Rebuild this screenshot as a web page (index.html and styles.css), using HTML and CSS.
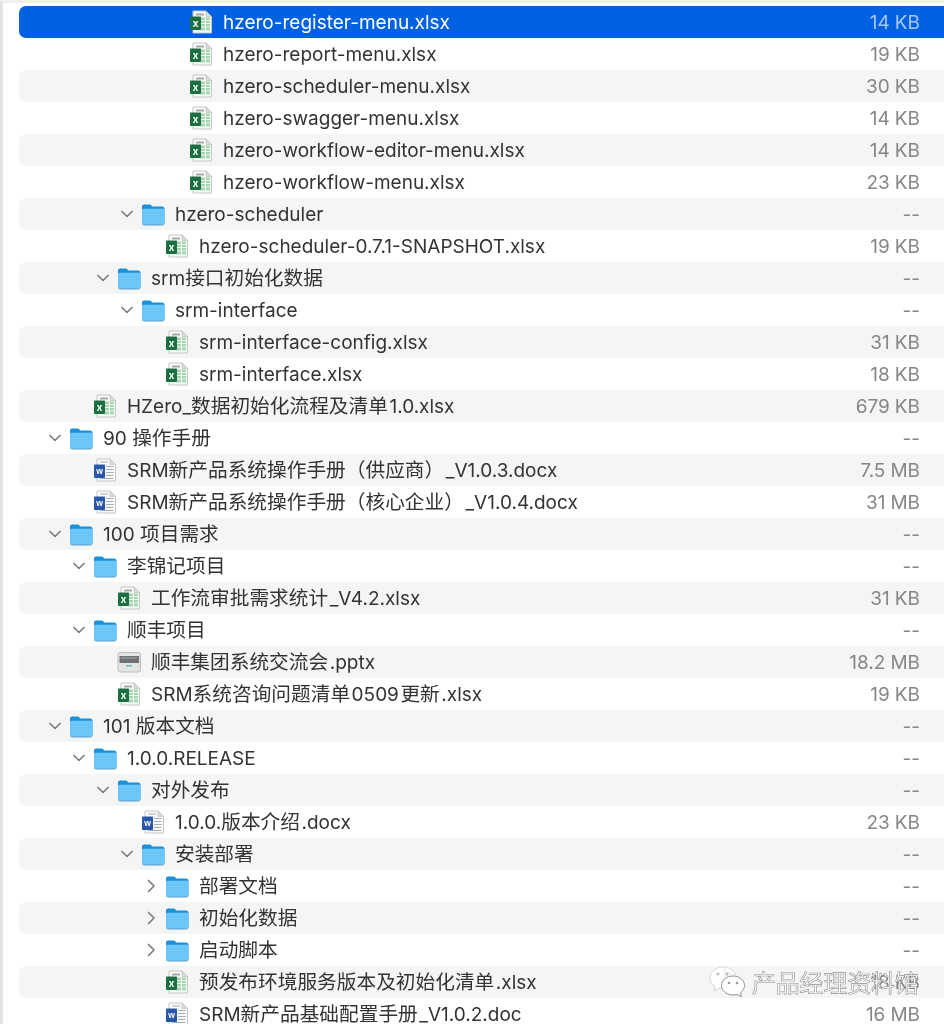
FILE: index.html
```html
<!DOCTYPE html>
<html lang="zh">
<head>
<meta charset="utf-8">
<title>Finder</title>
<link rel="stylesheet" href="styles.css">
</head>
<body>
<svg class="defs" width="0" height="0" aria-hidden="true">
  <symbol id="chev-d" viewBox="0 0 16 16"><path d="M3 5.500 8 10.500 13 5.500" fill="none" stroke="#7d7d7d" stroke-width="1.700" stroke-linecap="round" stroke-linejoin="round"/></symbol>
  <symbol id="chev-r" viewBox="0 0 16 16"><path d="M5.500 2.500 11 8 5.500 13.500" fill="none" stroke="#7d7d7d" stroke-width="1.700" stroke-linecap="round" stroke-linejoin="round"/></symbol>
  <symbol id="folder" viewBox="0 0 24 24">
    <path d="M1 4.500Q1 2.500 3 2.500H8.500Q9.800 2.500 10.500 3.600L11.300 4.600H21Q23.500 4.600 23.500 7V20Q23.500 22.500 21 22.500H3.500Q1 22.500 1 20Z" fill="#1c8fdc"/>
    <path d="M1 8Q1 6.700 2.500 6.700H22Q23.500 6.700 23.500 8V20Q23.500 22.600 21 22.600H3.500Q1 22.600 1 20Z" fill="#6cc6f8"/>
    <path d="M1 20Q1 22.600 3.500 22.600H21Q23.500 22.600 23.500 20V21Q23.500 23.500 21 23.500H3.500Q1 23.500 1 21Z" fill="#5a9fc8"/>
  </symbol>
  <symbol id="xls" viewBox="0 0 24 24">
    <path d="M4 1H17L22.500 6.500V23H4Z" fill="#fafafa" stroke="#c4c4c4"/>
    <path d="M17 1V6.500H22.500Z" fill="#dcdcdc" stroke="#bbb" stroke-width=".6"/>
    <path d="M7 3.500H15V5.500H7Z" fill="#a8a8a8"/>
    <path d="M12 7.500H21V20.500H12Z" fill="#a5d8ae"/>
    <path d="M12 10.500H21M12 13.500H21M12 17H21M16.500 7.500V20.500" stroke="#fff" stroke-width=".9"/>
    <rect x="1" y="6.500" width="11" height="13.500" rx=".8" fill="#1d6f42"/>
    <text x="6.500" y="16.600" class="icon-letter">x</text>
  </symbol>
  <symbol id="doc" viewBox="0 0 24 24">
    <path d="M4 1H17L22.500 6.500V23H4Z" fill="#fafafa" stroke="#c4c4c4"/>
    <path d="M17 1V6.500H22.500Z" fill="#dcdcdc" stroke="#bbb" stroke-width=".6"/>
    <path d="M7 4H15M13 8.500H20.500M13 11.500H20.500M13 14.500H20.500M13 17.500H20.500M7 20.500H20.500" stroke="#a9adb5" stroke-width="1.100"/>
    <rect x="1" y="6.500" width="11" height="13.500" rx=".8" fill="#2a57a8"/>
    <text x="6.500" y="16.400" class="icon-letter small">w</text>
  </symbol>
  <symbol id="ppt" viewBox="0 0 24 24">
    <rect x="1" y="2.500" width="22.500" height="19.500" rx="2.500" fill="#e4e4e2" stroke="#bdbdbd"/>
    <rect x="2.500" y="6" width="19.500" height="7" fill="#6e7275"/>
    <path d="M4 8H20" stroke="#a6a9ab" stroke-width="1"/>
    <rect x="9" y="15" width="6" height="1.500" fill="#6db4bb"/>
  </symbol>
  <symbol id="wechat" viewBox="0 0 38 34">
    <path d="M15 2C7.500 2 2 7 2 13c0 3.500 2 6.500 5 8.500L6 26l5-2.800c1 .3 2.500 .5 4 .5" fill="#fff" stroke="#d4d4d4" stroke-width="1"/>
    <path d="M15 2c6.500 0 11.500 3.500 12.800 8.500" fill="#fff" stroke="#d4d4d4" stroke-width="1"/>
    <path d="M25 11c6.500 0 11.500 4.300 11.500 9.500 0 3-1.600 5.500-4 7.300l1 4-4.500-2.400c-1.200 .4-2.700 .6-4 .6-6.500 0-11.500-4.300-11.500-9.500S18.500 11 25 11Z" fill="#fff" stroke="#8f8f8f" stroke-width="1"/>
    <circle cx="10" cy="9" r="1.500" fill="#bbb"/><circle cx="19" cy="9" r="1.500" fill="#bbb"/>
    <circle cx="21" cy="18" r="1.300" fill="#999"/><circle cx="29" cy="18" r="1.300" fill="#999"/>
  </symbol>
</svg>

<main class="window">
  <div class="list">
    <div class="row selected l4"><span class="chev"></span><svg class="ic"><use href="#xls"/></svg><span class="name">hzero-register-menu.xlsx</span><span class="size">14<i></i>KB</span></div>
    <div class="row l4"><span class="chev"></span><svg class="ic"><use href="#xls"/></svg><span class="name">hzero-report-menu.xlsx</span><span class="size">19<i></i>KB</span></div>
    <div class="row l4"><span class="chev"></span><svg class="ic"><use href="#xls"/></svg><span class="name">hzero-scheduler-menu.xlsx</span><span class="size">30<i></i>KB</span></div>
    <div class="row l4"><span class="chev"></span><svg class="ic"><use href="#xls"/></svg><span class="name">hzero-swagger-menu.xlsx</span><span class="size">14<i></i>KB</span></div>
    <div class="row l4"><span class="chev"></span><svg class="ic"><use href="#xls"/></svg><span class="name">hzero-workflow-editor-menu.xlsx</span><span class="size">14<i></i>KB</span></div>
    <div class="row l4"><span class="chev"></span><svg class="ic"><use href="#xls"/></svg><span class="name">hzero-workflow-menu.xlsx</span><span class="size">23<i></i>KB</span></div>
    <div class="row l3"><svg class="chev"><use href="#chev-d"/></svg><svg class="ic"><use href="#folder"/></svg><span class="name">hzero-scheduler</span><span class="size">--</span></div>
    <div class="row l4-"><span class="chev"></span><svg class="ic"><use href="#xls"/></svg><span class="name">hzero-scheduler-0.7.1-SNAPSHOT.xlsx</span><span class="size">19<i></i>KB</span></div>
    <div class="row l2"><svg class="chev"><use href="#chev-d"/></svg><svg class="ic"><use href="#folder"/></svg><span class="name">srm<b class="zh">接口初始化数据</b></span><span class="size">--</span></div>
    <div class="row l3"><svg class="chev"><use href="#chev-d"/></svg><svg class="ic"><use href="#folder"/></svg><span class="name">srm-interface</span><span class="size">--</span></div>
    <div class="row l4-"><span class="chev"></span><svg class="ic"><use href="#xls"/></svg><span class="name">srm-interface-config.xlsx</span><span class="size">31<i></i>KB</span></div>
    <div class="row l4-"><span class="chev"></span><svg class="ic"><use href="#xls"/></svg><span class="name">srm-interface.xlsx</span><span class="size">18<i></i>KB</span></div>
    <div class="row l1"><span class="chev"></span><svg class="ic"><use href="#xls"/></svg><span class="name">HZero_<b class="zh">数据初始化流程及清单</b>1.0.xlsx</span><span class="size">679<i></i>KB</span></div>
    <div class="row l0"><svg class="chev"><use href="#chev-d"/></svg><svg class="ic"><use href="#folder"/></svg><span class="name">90 <b class="zh">操作手册</b></span><span class="size">--</span></div>
    <div class="row l1"><span class="chev"></span><svg class="ic"><use href="#doc"/></svg><span class="name">SRM<b class="zh">新产品系统操作手册（供应商）</b>_V1.0.3.docx</span><span class="size">7.5<i></i>MB</span></div>
    <div class="row l1"><span class="chev"></span><svg class="ic"><use href="#doc"/></svg><span class="name">SRM<b class="zh">新产品系统操作手册（核心企业）</b>_V1.0.4.docx</span><span class="size">31<i></i>MB</span></div>
    <div class="row l0"><svg class="chev"><use href="#chev-d"/></svg><svg class="ic"><use href="#folder"/></svg><span class="name">100 <b class="zh">项目需求</b></span><span class="size">--</span></div>
    <div class="row l1"><svg class="chev"><use href="#chev-d"/></svg><svg class="ic"><use href="#folder"/></svg><span class="name"><b class="zh">李锦记项目</b></span><span class="size">--</span></div>
    <div class="row l2"><span class="chev"></span><svg class="ic"><use href="#xls"/></svg><span class="name"><b class="zh">工作流审批需求统计</b>_V4.2.xlsx</span><span class="size">31<i></i>KB</span></div>
    <div class="row l1"><svg class="chev"><use href="#chev-d"/></svg><svg class="ic"><use href="#folder"/></svg><span class="name"><b class="zh">顺丰项目</b></span><span class="size">--</span></div>
    <div class="row l2"><span class="chev"></span><svg class="ic"><use href="#ppt"/></svg><span class="name"><b class="zh">顺丰集团系统交流会</b>.pptx</span><span class="size">18.2<i></i>MB</span></div>
    <div class="row l2"><span class="chev"></span><svg class="ic"><use href="#xls"/></svg><span class="name">SRM<b class="zh">系统咨询问题清单</b>0509<b class="zh">更新</b>.xlsx</span><span class="size">19<i></i>KB</span></div>
    <div class="row l0"><svg class="chev"><use href="#chev-d"/></svg><svg class="ic"><use href="#folder"/></svg><span class="name">101 <b class="zh">版本文档</b></span><span class="size">--</span></div>
    <div class="row l1"><svg class="chev"><use href="#chev-d"/></svg><svg class="ic"><use href="#folder"/></svg><span class="name">1.0.0.RELEASE</span><span class="size">--</span></div>
    <div class="row l2"><svg class="chev"><use href="#chev-d"/></svg><svg class="ic"><use href="#folder"/></svg><span class="name"><b class="zh">对外发布</b></span><span class="size">--</span></div>
    <div class="row l3"><span class="chev"></span><svg class="ic"><use href="#doc"/></svg><span class="name">1.0.0.<b class="zh">版本介绍</b>.docx</span><span class="size">23<i></i>KB</span></div>
    <div class="row l3"><svg class="chev"><use href="#chev-d"/></svg><svg class="ic"><use href="#folder"/></svg><span class="name"><b class="zh">安装部署</b></span><span class="size">--</span></div>
    <div class="row l4-"><svg class="chev"><use href="#chev-r"/></svg><svg class="ic"><use href="#folder"/></svg><span class="name"><b class="zh">部署文档</b></span><span class="size">--</span></div>
    <div class="row l4-"><svg class="chev"><use href="#chev-r"/></svg><svg class="ic"><use href="#folder"/></svg><span class="name"><b class="zh">初始化数据</b></span><span class="size">--</span></div>
    <div class="row l4-"><svg class="chev"><use href="#chev-r"/></svg><svg class="ic"><use href="#folder"/></svg><span class="name"><b class="zh">启动脚本</b></span><span class="size">--</span></div>
    <div class="row l4-"><span class="chev"></span><svg class="ic"><use href="#xls"/></svg><span class="name"><b class="zh">预发布环境服务版本及初始化清单</b>.xlsx</span><span class="size">18<i></i>KB</span></div>
    <div class="row l4-"><span class="chev"></span><svg class="ic"><use href="#doc"/></svg><span class="name">SRM<b class="zh">新产品基础配置手册</b>_V1.0.2.doc</span><span class="size">16<i></i>MB</span></div>
  </div>
</main>
<aside class="watermark"><svg class="wm-icon"><use href="#wechat"/></svg><span class="wm-text">产品经理资料馆</span></aside>
</body>
</html>
```
FILE: styles.css
```css
* { box-sizing: border-box; }
html, body { margin: 0; height: 1024px; overflow: hidden; background: #fff; }
body { position: relative; font-family: Inter, "Noto Sans CJK SC", sans-serif; }
.defs { position: absolute; }
.icon-letter { font: 700 10px "Liberation Sans", sans-serif; fill: #fff; text-anchor: middle; }
.icon-letter.small { font-size: 8.5px; }

.window {
  height: 1024px;
  border-left: 3px solid #e7e3e3;
  border-top: 3px solid #f0f0f0;
  padding: 3px 0 0 16px;
  overflow: hidden;
  filter: blur(0.55px);
}
.list { display: flex; flex-direction: column; }
.row {
  display: flex;
  align-items: center;
  flex: none;
  height: 32px;
  padding-right: 24px;
  font-size: 19px;
  line-height: 30px;
  color: #333;
  border-radius: 7px 0 0 7px;
}
.row:nth-child(odd) { background: #f4f5f5; }
.row.selected { background: #0062e1; color: #fff; }
.row.selected .size { color: #a6c8f6; }

.chev { flex: none; width: 16px; height: 16px; margin-right: 6px; }
.ic { flex: none; width: 24px; height: 24px; margin-right: 10px; }
.name { flex: 1; white-space: nowrap; padding-top: 2px; }
.zh { font-weight: 400; font-size: 19.7px; font-family: "Noto Sans CJK SC", sans-serif; line-height: 1; margin: 0 1.5px; }
.name > .zh:first-child { margin-left: 0; }
.size { flex: none; color: #868686; white-space: nowrap; padding-top: 2px; }
.size i { display: inline-block; width: 5px; }

.l0 { padding-left: 28px; }
.l1 { padding-left: 52px; }
.l2 { padding-left: 76px; }
.l3 { padding-left: 100px; }
.l4- { padding-left: 124px; }
.l4 { padding-left: 148px; }

.watermark {
  position: absolute;
  left: 708px;
  top: 964px;
  display: flex;
  align-items: center;
  gap: 6px;
  filter: blur(0.4px);
}
.wm-icon { width: 38px; height: 34px; }
.wm-text {
  font: 400 24px "Noto Sans CJK SC", sans-serif;
  letter-spacing: -0.2px;
  color: #fff;
  -webkit-text-stroke: 0.6px #8f8f8f;
}
```
